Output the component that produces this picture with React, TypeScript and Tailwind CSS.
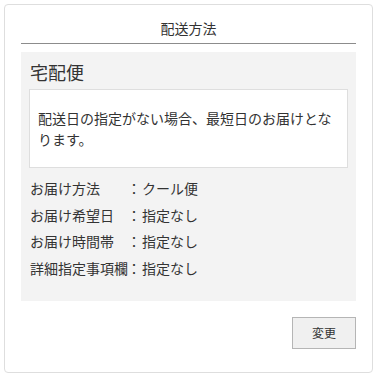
import React from "react";

const rows: [string, string][] = [
  ["お届け方法", "クール便"],
  ["お届け希望日", "指定なし"],
  ["お届け時間帯", "指定なし"],
  ["詳細指定事項欄", "指定なし"],
];

export default function App() {
  return (
    <div
      className="w-[377px] h-[377px] bg-white p-[4px] text-[#333]"
      style={{ fontFamily: '"Noto Sans CJK JP", "Noto Sans", sans-serif' }}
    >
      <div className="h-[369px] border border-[#dedede] rounded-[4px] px-[16px] pt-[13px]">
        <div className="text-center text-[14px] leading-[21px] pb-[4px] border-b border-[#8c8c8c]">
          配送方法
        </div>
        <div className="mt-[8px] bg-[#f3f3f3] px-[8px] pt-[8px] pb-[20px]">
          <div className="text-[18px] leading-[24px] pl-[1px]">宅配便</div>
          <div className="mt-[5px] bg-white border border-[#dedede] px-[8px] pt-[18px] pb-[17px] text-[14px] leading-[21px]">
            配送日の指定がない場合、最短日のお届けとなります。
          </div>
          <div className="mt-[7px] pl-[1px]">
            {rows.map(([k, v]) => (
              <div key={k} className="flex text-[14px] leading-[26.5px]">
                <span className="w-[97px] whitespace-nowrap">{k}</span>
                <span className="w-[14px]">：</span>
                <span className="pl-[1px]">{v}</span>
              </div>
            ))}
          </div>
        </div>
        <div className="flex justify-end mt-[16px]">
          <button className="w-[64px] h-[32px] bg-[#f0f0f0] border border-[#b5b5b5] text-[12px] text-[#333]">
            変更
          </button>
        </div>
      </div>
    </div>
  );
}
